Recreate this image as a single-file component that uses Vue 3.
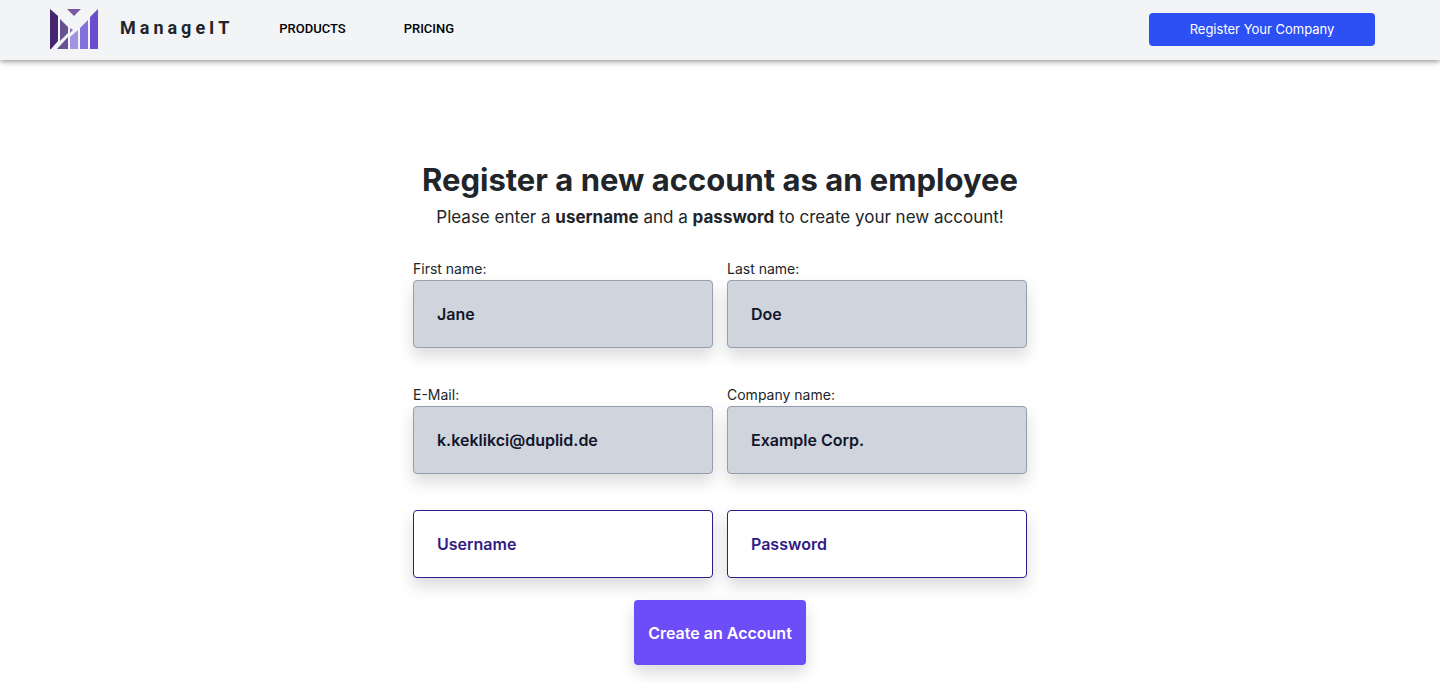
<script setup>
import { ref } from 'vue'

const details = [
  { id: 'first-name', label: 'First name:', value: 'Jane', type: 'text' },
  { id: 'last-name', label: 'Last name:', value: 'Doe', type: 'text' },
  { id: 'email', label: 'E-Mail:', value: 'k.keklikci@duplid.de', type: 'email' },
  { id: 'company', label: 'Company name:', value: 'Example Corp.', type: 'text' },
]
const username = ref('')
const password = ref('')
</script>

<template>
  <div class="page">
    <header class="topbar">
      <a class="brand" href="#">
        <svg class="logo" viewBox="0 0 48 40" aria-hidden="true">
          <path fill="#45256f" d="M0 0L8 7V32L1 40H0Z" />
          <path fill="#67508f" d="M10 10L18 18V24L10 32Z" />
          <path fill="#67508f" d="M18 28V40H7Z" />
          <path fill="#7658a5" d="M17 0H31L24 7Z" />
          <path fill="#8a72bd" d="M20 19L23 21L20 24Z" />
          <path fill="#a292e2" d="M20 28L28 21V40H20Z" />
          <path fill="#8370d8" d="M30 19L38 11V40H30Z" />
          <path fill="#6c4dce" d="M40 8L48 0V40H40Z" />
        </svg>
        <span class="brand-name">ManageIT</span>
      </a>
      <nav class="nav">
        <a href="#">PRODUCTS</a>
        <a href="#">PRICING</a>
      </nav>
      <button class="company-button" type="button">Register Your Company</button>
    </header>

    <main class="content">
      <h1>Register a new account as an employee</h1>
      <p class="intro">
        Please enter a <strong>username</strong> and a <strong>password</strong> to create your new account!
      </p>
      <form class="form" @submit.prevent>
        <div v-for="field in details" :key="field.id" class="field">
          <label :for="field.id">{{ field.label }}</label>
          <input :id="field.id" class="filled" :type="field.type" :value="field.value" readonly />
        </div>
        <input v-model="username" type="text" placeholder="Username" aria-label="Username" />
        <input v-model="password" type="password" placeholder="Password" aria-label="Password" />
        <button class="submit" type="submit">Create an Account</button>
      </form>
    </main>
  </div>
</template>

<style>
body {
  margin: 0;
  background: #fff;
}
</style>

<style scoped>
.page {
  color: #212529;
  font-family: Inter, 'Liberation Sans', sans-serif;
}

.topbar {
  display: flex;
  align-items: center;
  box-sizing: border-box;
  height: 60px;
  padding: 0 65px 2px 50px;
  background: #f3f4f6;
  box-shadow: 0 1px 6px rgba(0, 0, 0, 0.5);
}

.brand {
  display: flex;
  align-items: center;
  gap: 22px;
  color: inherit;
  text-decoration: none;
}

.logo {
  width: 48px;
  height: 40px;
}

.brand-name {
  padding-bottom: 2px;
  font: 700 18px/24px Roboto, sans-serif;
  letter-spacing: 4px;
}

.nav {
  display: flex;
  gap: 58px;
  margin-left: 46px;
}

.nav a {
  color: #000;
  font: 500 13px/20px Roboto, sans-serif;
  text-decoration: none;
}

.company-button {
  width: 226px;
  height: 33px;
  margin-left: auto;
  border: 0;
  border-radius: 4px;
  background: #2d50f5;
  color: #fff;
  font: 400 13px/20px Inter, sans-serif;
}

.content {
  padding: 100px 24px 18px;
}

h1 {
  margin: 0;
  font-size: 31px;
  font-weight: 700;
  line-height: 40px;
  text-align: center;
}

.intro {
  margin: 4px 0 28px;
  font-size: 17px;
  line-height: 26px;
  text-align: center;
}

.form {
  display: grid;
  grid-template-columns: repeat(2, minmax(0, 300px));
  justify-content: center;
  gap: 36px 14px;
}

.field {
  display: flex;
  flex-direction: column;
}

label {
  font-size: 14px;
  line-height: 22px;
}

input {
  box-sizing: border-box;
  width: 100%;
  height: 68px;
  padding: 0 23px;
  border: 1px solid #321b85;
  border-radius: 4px;
  background: #fff;
  box-shadow: 0 8px 16px rgba(0, 0, 0, 0.15);
  color: #321b85;
  font: 600 16px/24px Inter, sans-serif;
}

input::placeholder {
  color: #321b85;
  opacity: 1;
}

input.filled {
  border-color: #94a0b0;
  background: #d0d4dc;
  color: #11162b;
}

.submit {
  grid-column: 1 / -1;
  justify-self: center;
  height: 65px;
  margin-top: -14px;
  padding: 0 14px;
  border: 0;
  border-radius: 4px;
  background: #6c4df8;
  box-shadow: 0 8px 16px rgba(0, 0, 0, 0.15);
  color: #fff;
  font: 600 16px/24px Inter, sans-serif;
}
</style>
